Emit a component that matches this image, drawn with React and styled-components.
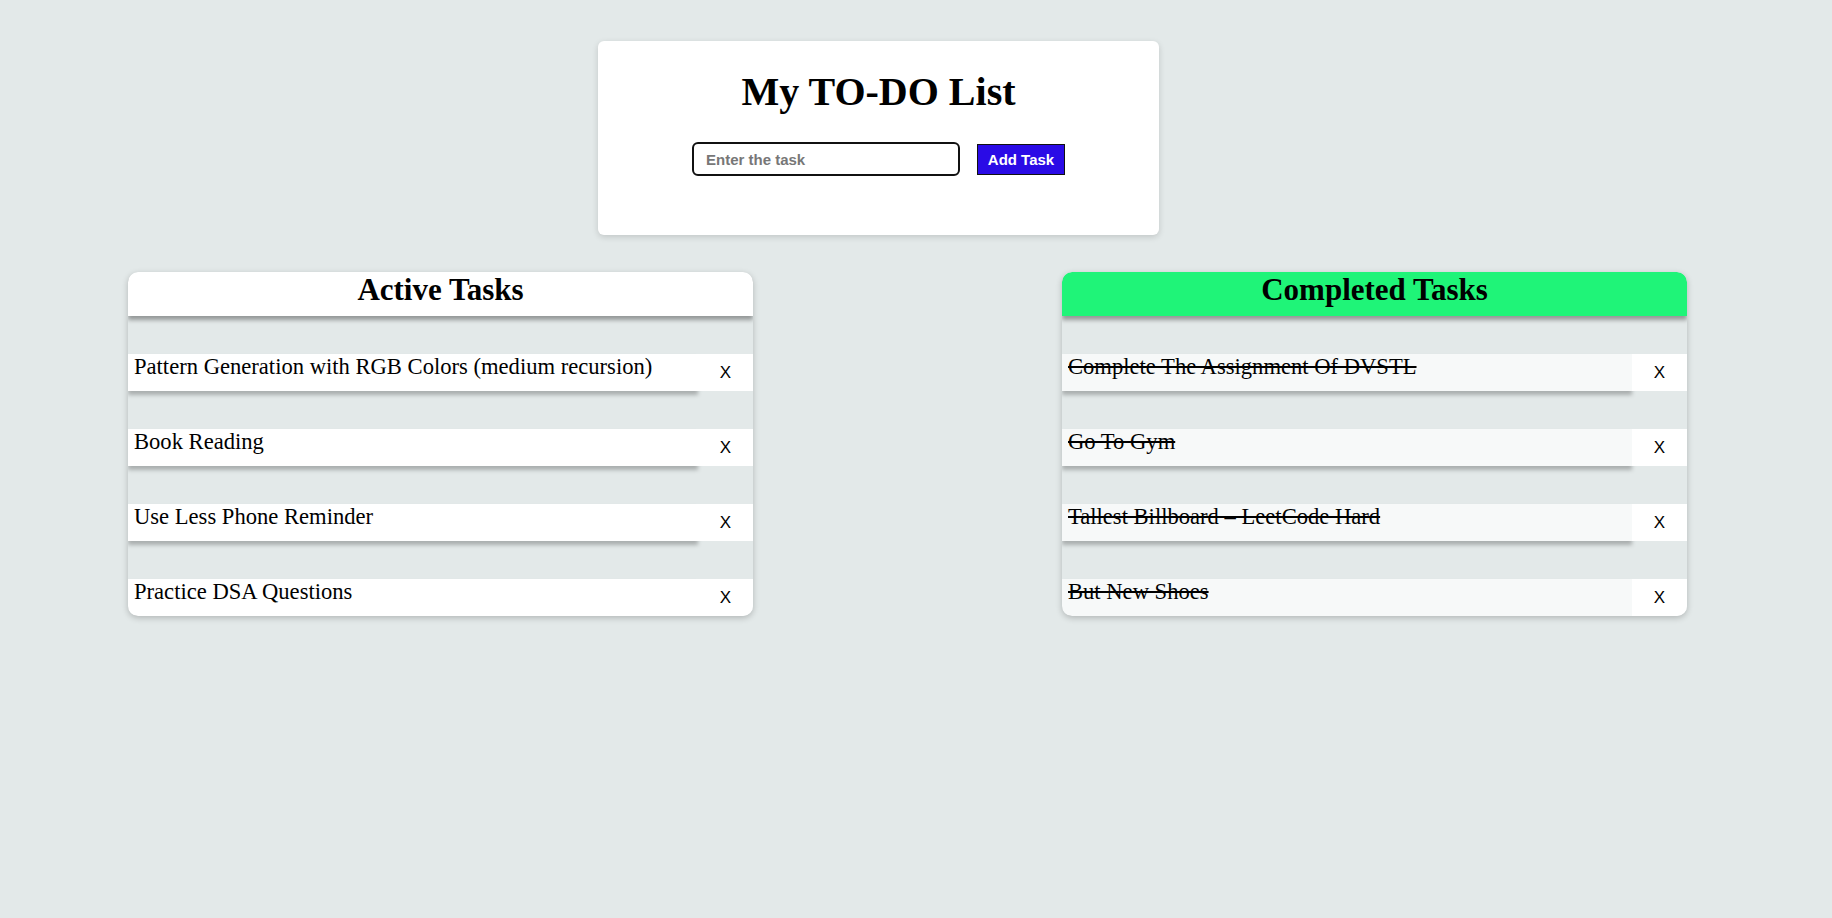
import React, { useState } from "react";
import styled, { createGlobalStyle } from "styled-components";

const GlobalStyle = createGlobalStyle`
	body {
		margin: 0;
		background-color: #e3e9e9;
		font-family: "Liberation Serif", "Times New Roman", serif;
	}
`;

const activeTasks = [
	"Pattern Generation with RGB Colors (medium recursion)",
	"Book Reading",
	"Use Less Phone Reminder",
	"Practice DSA Questions",
];

const completedTasks = [
	"Complete The Assignment Of DVSTL",
	"Go To Gym",
	"Tallest Billboard \u2013 LeetCode Hard",
	"But New Shoes",
];

function TaskPanel({ title, tasks, done }) {
	return (
		<Panel>
			<PanelHeader done={done}>
				<h2>{title}</h2>
			</PanelHeader>
			<TaskList>
				{tasks.map((task) => (
					<TaskRow key={task}>
						<TaskText done={done}>{task}</TaskText>
						<RemoveButton>X</RemoveButton>
					</TaskRow>
				))}
			</TaskList>
		</Panel>
	);
}

export default function App() {
	const [task, setTask] = useState("");

	return (
		<Page>
			<GlobalStyle />
			<TopRow>
				<HeaderCard>
					<h1>My TO-DO List</h1>
					<TaskForm onSubmit={(e) => e.preventDefault()}>
						<input
							placeholder="Enter the task"
							value={task}
							onChange={(e) => setTask(e.target.value)}
						/>
						<button type="submit">Add Task</button>
					</TaskForm>
				</HeaderCard>
			</TopRow>
			<Panels>
				<TaskPanel title="Active Tasks" tasks={activeTasks} />
				<TaskPanel title="Completed Tasks" tasks={completedTasks} done />
			</Panels>
		</Page>
	);
}

const Page = styled.div`
	min-height: 100vh;
	padding-top: 41px;
	box-sizing: border-box;
	display: flex;
	flex-direction: column;
`;

const TopRow = styled.div`
	display: flex;
	padding-left: 598px;
`;

const HeaderCard = styled.div`
	width: 561px;
	height: 194px;
	box-sizing: border-box;
	padding-top: 27px;
	background-color: #ffffff;
	border-radius: 6px;
	box-shadow: 0px 2px 6px rgba(0, 0, 0, 0.15);
	text-align: center;
	h1 {
		margin: 0;
		font-size: 40px;
		font-weight: 700;
		line-height: normal;
	}
`;

const TaskForm = styled.form`
	margin-top: 27px;
	display: flex;
	justify-content: center;
	align-items: center;
	gap: 17px;
	input {
		width: 268px;
		height: 34px;
		box-sizing: border-box;
		border: 2px solid #111111;
		border-radius: 6px;
		padding: 0 12px;
		font-family: "Liberation Sans", Arial, sans-serif;
		font-size: 15px;
		font-weight: 700;
		outline: none;
	}
	input::placeholder {
		color: #777777;
	}
	button {
		width: 88px;
		height: 31px;
		box-sizing: border-box;
		border: 1px solid #111111;
		background-color: #2a0be6;
		color: #ffffff;
		font-family: "Liberation Sans", Arial, sans-serif;
		font-size: 15px;
		font-weight: 700;
		padding: 0;
	}
`;

const Panels = styled.div`
	margin-top: 37px;
	display: flex;
	padding-left: 128px;
	gap: 309px;
`;

const Panel = styled.div`
	width: 625px;
	border-radius: 10px;
	overflow: hidden;
	box-shadow: 0px 2px 6px rgba(0, 0, 0, 0.22);
`;

const PanelHeader = styled.div`
	position: relative;
	z-index: 1;
	background-color: ${(props) => (props.done ? "#1ff478" : "#ffffff")};
	border-radius: 10px 10px 0 0;
	box-shadow: 0px 4px 4px rgba(0, 0, 0, 0.35);
	text-align: center;
	padding-bottom: 8px;
	h2 {
		margin: 0;
		font-size: 31px;
		font-weight: 700;
		line-height: normal;
	}
`;

const TaskList = styled.ul`
	list-style: none;
	margin: 0;
	padding: 38px 0 0;
	display: flex;
	flex-direction: column;
	gap: 38px;
`;

const TaskRow = styled.li`
	display: flex;
	height: 37px;
`;

const TaskText = styled.div`
	flex: 1;
	padding-left: 6px;
	background-color: ${(props) => (props.done ? "#f7f9f9" : "#ffffff")};
	box-shadow: 0px 4px 4px rgba(0, 0, 0, 0.25);
	font-size: 22.6px;
	line-height: normal;
	text-decoration: ${(props) => (props.done ? "line-through" : "none")};
	text-decoration-thickness: 2px;
`;

const RemoveButton = styled.button`
	width: 55px;
	border: 0;
	padding: 0;
	background-color: #ffffff;
	font-family: "Liberation Sans", Arial, sans-serif;
	font-size: 17px;
	color: #000000;
`;
